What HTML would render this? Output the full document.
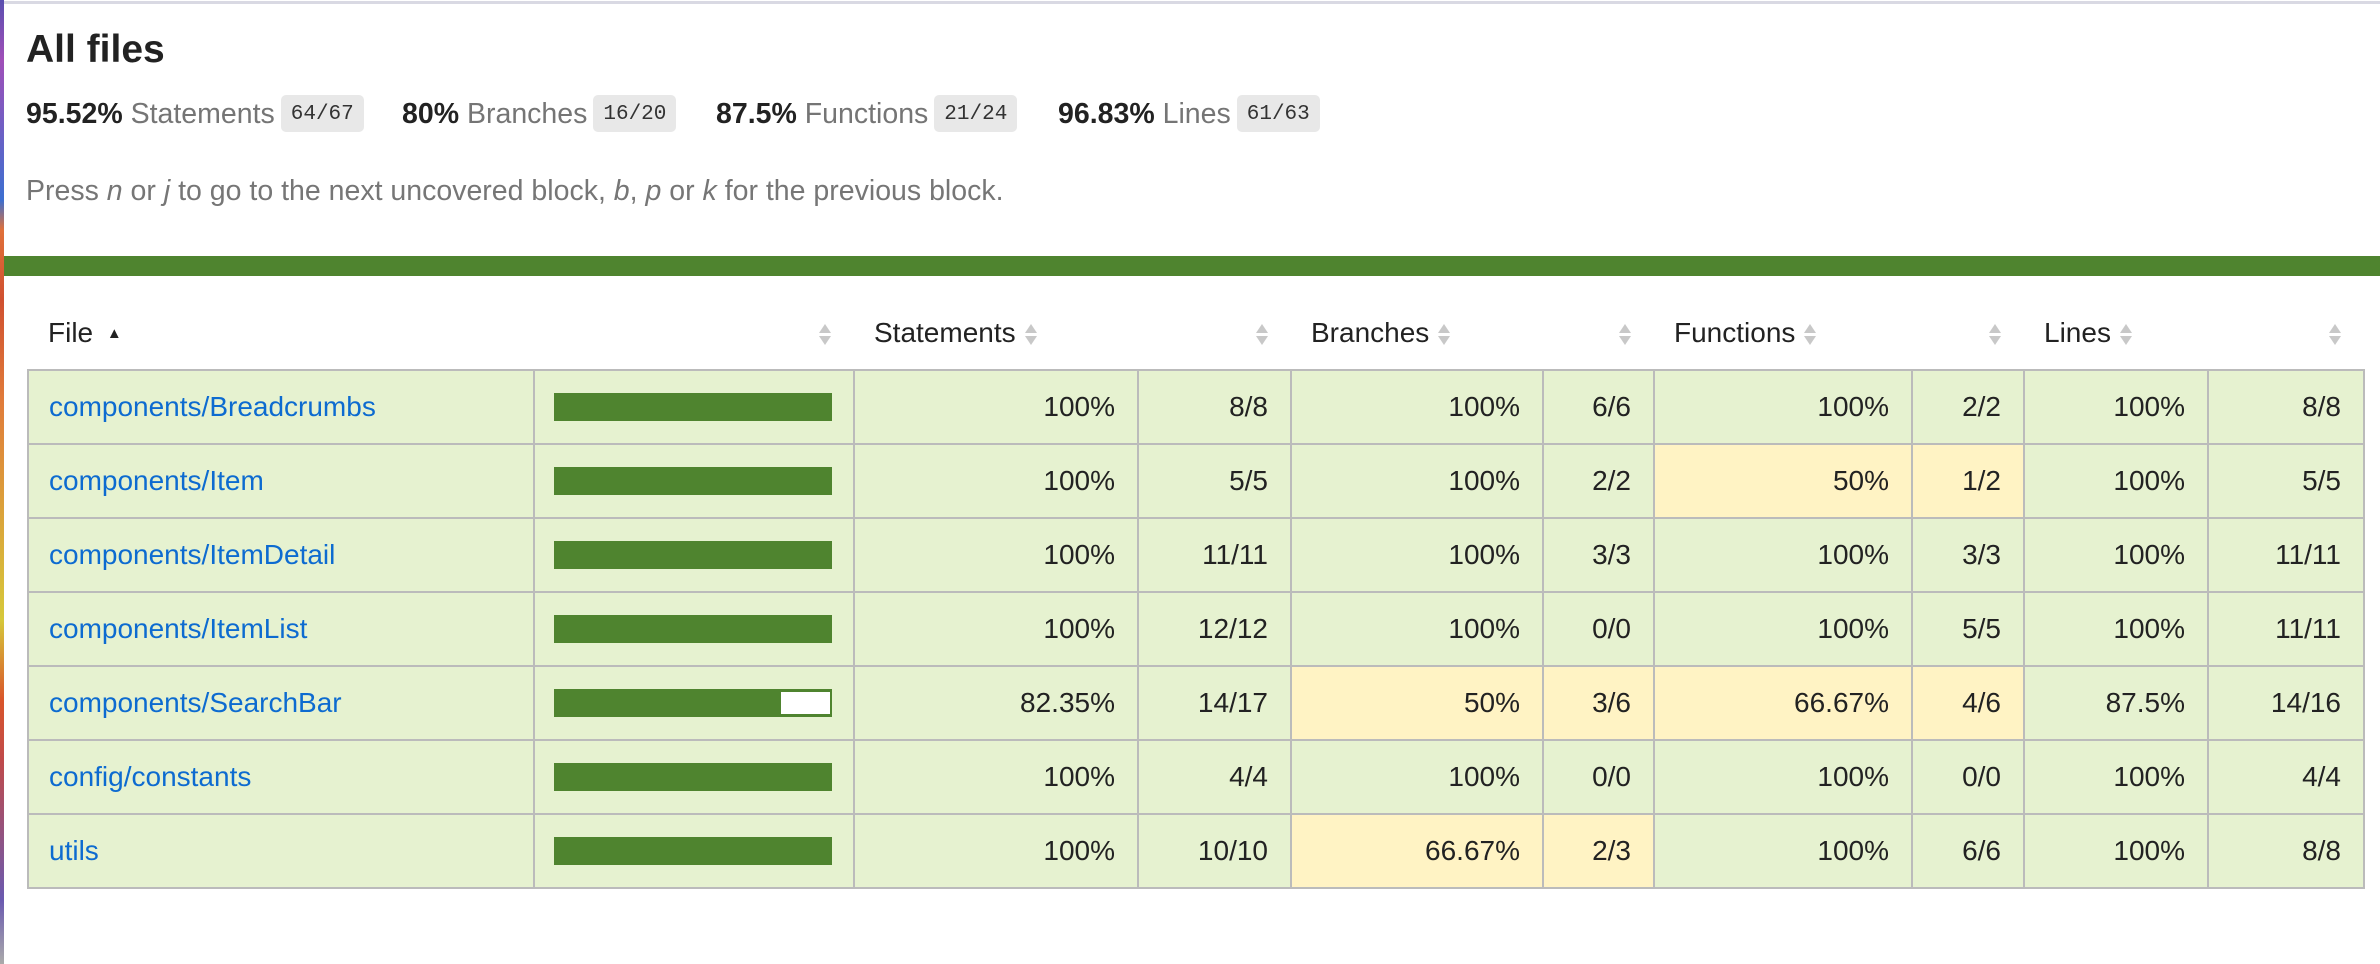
<!DOCTYPE html>
<html><head><meta charset="utf-8"><style>
html,body{margin:0;padding:0;background:#fff;}
body{width:2380px;height:964px;position:relative;overflow:hidden;font-family:"Liberation Sans",Arial,sans-serif;color:#222;}
.strip{position:absolute;left:0;top:0;width:4px;height:964px;background:linear-gradient(#5a4fb0 0,#a04fb8 60px,#3c6fd0 200px,#e0703a 230px,#d05030 300px,#e07b3a 400px,#d6c83a 620px,#d9552a 700px,#c04a4a 760px,#6a5ab0 900px,#aaa 964px);}
.topline{position:absolute;left:4px;top:1px;width:2376px;height:3px;background:#d9d9e3;}
h1{position:absolute;left:26px;top:28px;margin:0;font-size:39px;font-weight:bold;color:#222;}
.st{position:absolute;top:95px;font-size:28.5px;line-height:38px;white-space:nowrap;}
.st b{color:#222;}
.st span.l{color:#757575;}
.badge{display:inline-block;background:#e8e8e8;border-radius:5px;font-family:"Liberation Mono",monospace;font-size:21px;color:#333;padding:0 10px;height:37px;line-height:39px;vertical-align:top;margin-left:6px;}
.press{position:absolute;left:26px;top:175px;font-size:28.5px;color:#767676;}
.green{position:absolute;left:4px;top:256px;width:2376px;height:20px;background:#4f842f;}
table{position:absolute;left:27px;top:297px;border-collapse:collapse;table-layout:fixed;width:2336px;font-size:28px;}
th{height:72px;font-weight:normal;text-align:left;padding:0 20px;color:#222;white-space:nowrap;position:relative;}
th .s{display:inline-block;width:14px;height:22px;position:relative;vertical-align:middle;margin-left:8px;}
th .s:before{content:"";position:absolute;left:1px;top:0;border-left:6px solid transparent;border-right:6px solid transparent;border-bottom:9px solid #c8c8c8;}
th .s:after{content:"";position:absolute;left:1px;top:12px;border-left:6px solid transparent;border-right:6px solid transparent;border-top:9px solid #c8c8c8;}
th.r{text-align:right;padding-right:22px;}
td{height:72px;border:2px solid #bbb;padding:0 22px;text-align:right;color:#222;background:#e6f2d0;white-space:nowrap;}
td.f{text-align:left;padding-left:20px;}
td.f a{color:#0d6bd0;text-decoration:none;}
td.y{background:#fff3c4;}
.bar{display:block;width:278px;height:28px;background:#4f842f;margin:0 auto 0 -2px;position:relative;}
td.b{padding:0 0 0 21px;text-align:left;}
.bar i{position:absolute;right:2px;top:3px;bottom:3px;background:#fff;}
</style></head><body>
<div class="strip"></div><div class="topline"></div>
<h1>All files</h1>
<div class="st" style="left:26px"><b>95.52%</b> <span class="l">Statements</span><span class="badge">64/67</span></div>
<div class="st" style="left:402px"><b>80%</b> <span class="l">Branches</span><span class="badge">16/20</span></div>
<div class="st" style="left:716px"><b>87.5%</b> <span class="l">Functions</span><span class="badge">21/24</span></div>
<div class="st" style="left:1058px"><b>96.83%</b> <span class="l">Lines</span><span class="badge">61/63</span></div>
<div class="press">Press <i>n</i> or <i>j</i> to go to the next uncovered block, <i>b</i>, <i>p</i> or <i>k</i> for the previous block.</div>
<div class="green"></div>
<table>
<colgroup><col style="width:506px"><col style="width:320px"><col style="width:284px"><col style="width:153px"><col style="width:252px"><col style="width:111px"><col style="width:258px"><col style="width:112px"><col style="width:184px"><col style="width:156px"></colgroup>
<thead><tr>
<th>File <span style="font-size:15px;vertical-align:4px;margin-left:6px">▲</span></th><th class="r"><span class="s"></span></th>
<th>Statements<span class="s"></span></th><th class="r"><span class="s"></span></th>
<th>Branches<span class="s"></span></th><th class="r"><span class="s"></span></th>
<th>Functions<span class="s"></span></th><th class="r"><span class="s"></span></th>
<th>Lines<span class="s"></span></th><th class="r"><span class="s"></span></th>
</tr></thead>
<tbody>
<tr><td class="f"><a>components/Breadcrumbs</a></td><td class="b"><span class="bar"></span></td><td>100%</td><td>8/8</td><td>100%</td><td>6/6</td><td>100%</td><td>2/2</td><td>100%</td><td>8/8</td></tr>
<tr><td class="f"><a>components/Item</a></td><td class="b"><span class="bar"></span></td><td>100%</td><td>5/5</td><td>100%</td><td>2/2</td><td class="y">50%</td><td class="y">1/2</td><td>100%</td><td>5/5</td></tr>
<tr><td class="f"><a>components/ItemDetail</a></td><td class="b"><span class="bar"></span></td><td>100%</td><td>11/11</td><td>100%</td><td>3/3</td><td>100%</td><td>3/3</td><td>100%</td><td>11/11</td></tr>
<tr><td class="f"><a>components/ItemList</a></td><td class="b"><span class="bar"></span></td><td>100%</td><td>12/12</td><td>100%</td><td>0/0</td><td>100%</td><td>5/5</td><td>100%</td><td>11/11</td></tr>
<tr><td class="f"><a>components/SearchBar</a></td><td class="b"><span class="bar"><i style="width:49px"></i></span></td><td>82.35%</td><td>14/17</td><td class="y">50%</td><td class="y">3/6</td><td class="y">66.67%</td><td class="y">4/6</td><td>87.5%</td><td>14/16</td></tr>
<tr><td class="f"><a>config/constants</a></td><td class="b"><span class="bar"></span></td><td>100%</td><td>4/4</td><td>100%</td><td>0/0</td><td>100%</td><td>0/0</td><td>100%</td><td>4/4</td></tr>
<tr><td class="f"><a>utils</a></td><td class="b"><span class="bar"></span></td><td>100%</td><td>10/10</td><td class="y">66.67%</td><td class="y">2/3</td><td>100%</td><td>6/6</td><td>100%</td><td>8/8</td></tr>
</tbody></table>
</body></html>
